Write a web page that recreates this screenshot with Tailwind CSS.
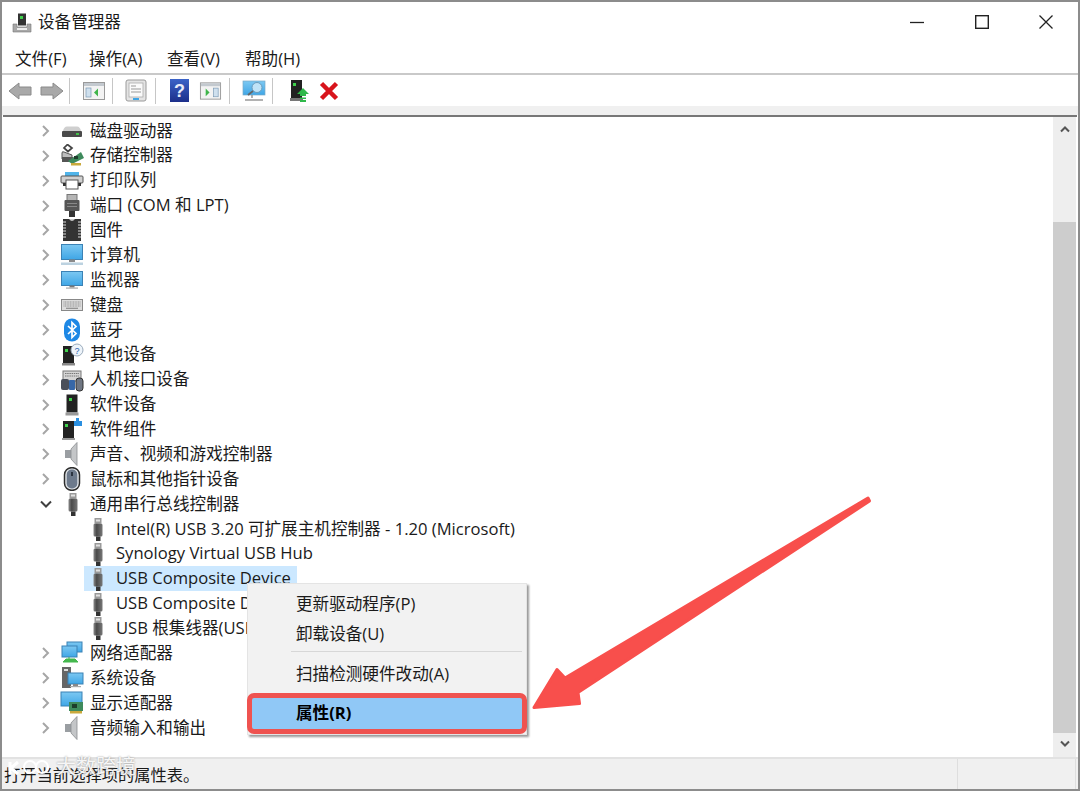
<!DOCTYPE html>
<html lang="zh-CN">
<head>
<meta charset="utf-8">
<title>设备管理器</title>
<script src="https://cdn.jsdelivr.net/npm/@tailwindcss/browser@4"></script>
</head>
<body class="m-0 overflow-hidden bg-white">
<svg width="0" height="0" class="absolute">
  <defs>
    <linearGradient id="scr" x1="0" y1="0" x2="0" y2="1"><stop offset="0" stop-color="#7cc8f2"/><stop offset="1" stop-color="#3fa6e6"/></linearGradient>
    <linearGradient id="blu" x1="0" y1="0" x2="0" y2="1"><stop offset="0" stop-color="#3b63c8"/><stop offset="1" stop-color="#1c2f8a"/></linearGradient>
    <linearGradient id="usbb" x1="0" y1="0" x2="1" y2="0"><stop offset="0" stop-color="#8a8a8a"/><stop offset=".35" stop-color="#4a4a4a"/><stop offset="1" stop-color="#777"/></linearGradient>
  </defs>
  <symbol id="hdd" viewBox="0 0 24 24"><path d="M3 12 Q4 7.500 7 7.500 H17 Q20 7.500 21 12Z" fill="#cfcfcf"/><rect x="2" y="12" width="20" height="6" rx="1" fill="#4a4a4a"/><rect x="16" y="14" width="3" height="2" fill="#43c04a"/></symbol>
  <symbol id="storage" viewBox="0 0 24 24"><path d="M7.500 0.500 L12 4 L8 7.500 L4 4Z" fill="none" stroke="#444" stroke-width="1.700"/><path d="M2 9 Q2 7 4 8 L12 11 V15 H2Z" fill="#bdbdbd" stroke="#555"/><rect x="2" y="13" width="11" height="5" fill="#555"/><path d="M8 17 L21 8 L24 14 L12 20Z" fill="#3e8a5c"/><rect x="14" y="12" width="4" height="3" fill="#1d3d2c"/><rect x="11" y="19" width="10" height="2.500" fill="#c9a93c"/></symbol>
  <symbol id="printer" viewBox="0 0 24 24"><rect x="5" y="3" width="14" height="5" fill="#4fb4ea"/><rect x="1" y="7" width="22" height="7" rx="1" fill="#d0d0d0" stroke="#555"/><rect x="3" y="14" width="18" height="3" fill="#333"/><rect x="6" y="11" width="12" height="9" fill="#fff" stroke="#555"/></symbol>
  <symbol id="port" viewBox="0 0 24 24"><rect x="7" y="0.500" width="10" height="6" fill="#b5b5b5" stroke="#777"/><rect x="4.500" y="6" width="15" height="11" rx="1" fill="#555"/><rect x="7" y="9" width="10" height="1" fill="#888"/><rect x="7" y="12" width="10" height="1" fill="#888"/><rect x="9" y="17" width="6" height="6" fill="#333"/></symbol>
  <symbol id="chip" viewBox="0 0 24 24"><rect x="3" y="1" width="18" height="22" fill="#c9c9c9"/><path d="M3 1 H9 Q12 5 15 1 H21 V23 H3Z" fill="#333"/><path d="M3 4 H6 M3 7 H6 M3 10 H6 M3 13 H6 M3 16 H6 M3 19 H6 M18 4 H21 M18 7 H21 M18 10 H21 M18 13 H21 M18 16 H21 M18 19 H21" stroke="#ddd"/></symbol>
  <symbol id="pc" viewBox="0 0 24 24"><rect x="1.500" y="1.500" width="21" height="15" fill="url(#scr)" stroke="#3b82b5"/><rect x="9" y="16.500" width="6" height="2.500" fill="#8a8a8a"/><rect x="1" y="19.500" width="22" height="2.500" fill="#bcd2e0"/></symbol>
  <symbol id="mon" viewBox="0 0 24 24"><rect x="1.500" y="3.500" width="21" height="14" fill="url(#scr)" stroke="#3b82b5"/><rect x="9.500" y="17.500" width="5" height="2" fill="#777"/><rect x="6" y="19.500" width="12" height="1.200" fill="#aaa"/></symbol>
  <symbol id="kbd" viewBox="0 0 24 24"><rect x="1.500" y="6.500" width="21" height="11" fill="#dcdcdc" stroke="#888"/><path d="M3.500 9 H20.500 M3.500 11 H20.500 M3.500 13 H20.500" stroke="#8c8c8c" stroke-dasharray="1 .6"/><path d="M6 15.300 H18" stroke="#8c8c8c" stroke-width="1.200"/></symbol>
  <symbol id="bt" viewBox="0 0 24 24"><rect x="4" y="0.500" width="16" height="23" rx="8" fill="#1e88e5"/><path d="M8 8 L16 15.500 L12 19.500 V4.500 L16 8.500 L8 16" fill="none" stroke="#fff" stroke-width="1.700"/></symbol>
  <symbol id="other" viewBox="0 0 24 24"><rect x="3" y="3" width="11" height="17" fill="#222"/><rect x="5" y="6" width="3" height="3" fill="#3fd14c"/><rect x="2" y="20" width="13" height="2.500" fill="#888"/><circle cx="17" cy="7" r="6" fill="#eef4fa" stroke="#9ab"/><text x="17" y="10.500" font-size="9" text-anchor="middle" fill="#2a62b0" font-family="Liberation Sans">?</text></symbol>
  <symbol id="hid" viewBox="0 0 24 24"><rect x="3" y="3" width="18" height="10" fill="#d5d5d5" stroke="#777"/><path d="M5 5.500 H19 M5 8 H19" stroke="#777" stroke-dasharray="1.500 .7"/><rect x="1" y="11" width="8" height="11" rx="2" fill="#4a4f5a"/><rect x="9" y="12" width="6" height="10" rx="1" fill="#3667a8"/><rect x="16" y="10" width="7" height="13" rx="3" fill="#6f7682" stroke="#333"/></symbol>
  <symbol id="soft" viewBox="0 0 24 24"><rect x="6.500" y="1.500" width="11" height="18" fill="#222"/><rect x="9" y="5" width="3" height="3" fill="#3fd14c"/><rect x="5.500" y="19.500" width="13" height="3" fill="#999"/></symbol>
  <symbol id="comp" viewBox="0 0 24 24"><rect x="3" y="4" width="11" height="17" fill="#222"/><rect x="5" y="7" width="3" height="3" fill="#3fd14c"/><rect x="2" y="21" width="13" height="2" fill="#999"/><path d="M14 4 H16 V1 H19 V4 H22 V9 H14Z" fill="#2a8fe0"/></symbol>
  <symbol id="spk" viewBox="0 0 24 24"><rect x="5" y="8" width="6" height="8" fill="#9a9ea2"/><path d="M11 7 L17 0.500 V23.500 L11 17Z" fill="#c4c6c8" stroke="#8a8d90" stroke-width=".8"/></symbol>
  <symbol id="mouse" viewBox="0 0 24 24"><rect x="4.500" y="0.700" width="15" height="22.600" rx="7" fill="#dfe3e7" stroke="#2d2d2d" stroke-width="1.500"/><rect x="6.700" y="2.500" width="10.600" height="19" rx="5" fill="#6d7a8c"/><rect x="11" y="5" width="2" height="4" fill="#2a3340"/></symbol>
  <symbol id="usb" viewBox="0 0 24 24"><rect x="9.500" y="1" width="7" height="5.500" fill="#9a9a9a"/><rect x="11" y="2.500" width="4" height="2" fill="#e2e2e2"/><rect x="8.500" y="6.500" width="9" height="13" rx="1.500" fill="url(#usbb)"/><rect x="11" y="19.500" width="4.500" height="4.500" fill="#333"/></symbol>
  <symbol id="net" viewBox="0 0 24 24"><rect x="7" y="1" width="15" height="10" fill="url(#scr)" stroke="#3b82b5"/><rect x="2" y="5" width="15" height="11" fill="url(#scr)" stroke="#3b82b5"/><path d="M9 16 V19 M3 21 H18 L15 18 H6Z" fill="#45b84e" stroke="#45b84e"/></symbol>
  <symbol id="sys" viewBox="0 0 24 24"><rect x="2" y="1" width="9" height="21" fill="#666"/><rect x="4" y="3" width="4" height="2" fill="#ddd"/><rect x="8" y="7" width="15" height="11" fill="url(#scr)" stroke="#3b82b5"/><rect x="13" y="18" width="5" height="2" fill="#888"/><rect x="10" y="20" width="11" height="1.200" fill="#aaa"/></symbol>
  <symbol id="disp" viewBox="0 0 24 24"><rect x="1" y="1" width="21" height="14" fill="url(#scr)" stroke="#3b82b5"/><rect x="9" y="11" width="14" height="9" fill="#3e8a5c"/><rect x="12" y="13" width="5" height="4" fill="#1d3d2c"/><rect x="10" y="20" width="12" height="2.500" fill="#c9a93c"/></symbol>
  <symbol id="chev" viewBox="0 0 18 18"><path d="M6 4 L11 9 L6 14" fill="none" stroke="#a6a6a6" stroke-width="2"/></symbol>
  <symbol id="chevd" viewBox="0 0 18 18"><path d="M4 6.500 L9 11.500 L14 6.500" fill="none" stroke="#404040" stroke-width="2"/></symbol>
</svg>

<div class="relative w-[1080px] h-[791px] flex flex-col border-x-2 border-t-2 border-b-2 border-[#8c8c8c] text-[#1a1a1a] text-[16.6px] font-['Open_Sans','Noto_Sans_CJK_SC',sans-serif] overflow-hidden">

  <!-- title bar -->
  <div class="h-[44px] flex items-center shrink-0 bg-white">
    <svg class="ml-[10px] mb-[3px] w-5 h-5" viewBox="0 0 20 20"><rect x="6" y="0.500" width="8" height="12" fill="#333"/><rect x="8" y="3" width="3" height="3" fill="#3fd14c"/><path d="M1 11 H5 V14 H15 V11 H19 V19 H1Z" fill="#a8a8a8" stroke="#777" stroke-width=".6"/><rect x="5" y="15" width="10" height="2" fill="#eee"/></svg>
    <span class="ml-[6px] mb-[4px] leading-none">设备管理器</span>
    <div class="ml-auto flex items-center mb-[4px]">
      <svg class="w-4 h-4 mr-[49px]" viewBox="0 0 16 16"><path d="M1 8.500 H15" stroke="#222" stroke-width="1.300"/></svg>
      <svg class="w-4 h-4 mr-[48px]" viewBox="0 0 16 16"><rect x="1.700" y="1.700" width="12.600" height="12.600" fill="none" stroke="#222" stroke-width="1.400"/></svg>
      <svg class="w-4 h-4 mr-[24px]" viewBox="0 0 16 16"><path d="M1.500 1.500 L14.500 14.500 M14.500 1.500 L1.500 14.500" stroke="#222" stroke-width="1.300"/></svg>
    </div>
  </div>

  <!-- menu bar -->
  <div class="h-[27px] flex items-center shrink-0 pl-[13px] bg-white">
    <span class="w-[74px]">文件(F)</span><span class="w-[78px]">操作(A)</span><span class="w-[78px]">查看(V)</span><span>帮助(H)</span>
  </div>

  <!-- toolbar -->
  <div class="h-[33px] shrink-0 flex items-center border-t-2 border-[#c9c9c9] bg-white pl-[6px]">
    <svg class="w-[24px] h-[20px]" viewBox="0 0 24 20"><path d="M1 10 L11 2 V6 H23 V14 H11 V18Z" fill="#a9a9a9" stroke="#8a8a8a"/></svg>
    <svg class="w-[24px] h-[20px] ml-[8px]" viewBox="0 0 24 20"><path d="M23 10 L13 2 V6 H1 V14 H13 V18Z" fill="#a9a9a9" stroke="#8a8a8a"/></svg>
    <div class="w-px h-[26px] bg-[#c6c6c6] ml-[5px]"></div>
    <svg class="w-[24px] h-[22px] ml-[12px]" viewBox="0 0 24 22"><rect x="1.500" y="2.500" width="21" height="17" fill="#f3f3f3" stroke="#9a9a9a"/><rect x="2" y="3" width="20" height="3" fill="#c3c9cf"/><rect x="4" y="8" width="5" height="9" fill="#cfe0ee" stroke="#7b9ab5" stroke-width=".7"/><path d="M16 8.500 L12 12.500 L16 16.500Z" fill="#3fb54a"/></svg>
    <div class="w-px h-[26px] bg-[#c6c6c6] ml-[6px]"></div>
    <svg class="w-[22px] h-[24px] ml-[12px]" viewBox="0 0 22 24"><rect x="1" y="1" width="20" height="21" rx="2" fill="#e4e4e4" stroke="#9a9a9a"/><rect x="4" y="4" width="14" height="14" fill="#fafafa" stroke="#aaa" stroke-width=".8"/><path d="M6 7 H11 M6 10 H16 M6 13 H16" stroke="#999"/><rect x="8" y="19" width="6" height="2" fill="#3fa6e6"/></svg>
    <div class="w-px h-[26px] bg-[#c6c6c6] ml-[8px]"></div>
    <svg class="w-[19px] h-[23px] ml-[14px]" viewBox="0 0 19 23"><rect width="19" height="23" fill="url(#blu)"/><text x="9.500" y="18" text-anchor="middle" font-size="18" font-weight="700" fill="#e8ecf8" font-family="Liberation Sans">?</text></svg>
    <svg class="w-[23px] h-[22px] ml-[10px]" viewBox="0 0 24 22"><rect x="1.500" y="2.500" width="21" height="17" fill="#f3f3f3" stroke="#9a9a9a"/><rect x="2" y="3" width="20" height="3" fill="#c3c9cf"/><rect x="15" y="8" width="5" height="9" fill="#cfe0ee" stroke="#7b9ab5" stroke-width=".7"/><path d="M7 8.500 L11 12.500 L7 16.500Z" fill="#3fb54a"/></svg>
    <div class="w-px h-[26px] bg-[#c6c6c6] ml-[7px]"></div>
    <svg class="w-[24px] h-[24px] ml-[12px]" viewBox="0 0 24 24"><rect x="1" y="2" width="22" height="14" fill="url(#scr)" stroke="#7aa9c7" stroke-width=".7"/><circle cx="15" cy="8.500" r="5" fill="#bfe3f7" stroke="#6a9cbc"/><path d="M11 12 L6 16" stroke="#666" stroke-width="1.800"/><path d="M10 16 V19 M3 21 H21" stroke="#999" stroke-width="1.500"/></svg>
    <div class="w-px h-[26px] bg-[#c6c6c6] ml-[6px]"></div>
    <svg class="w-[20px] h-[24px] ml-[17px]" viewBox="0 0 20 24"><rect x="1" y="1" width="11" height="18" fill="#222"/><rect x="3" y="4" width="3" height="3" fill="#3fd14c"/><rect x="0" y="19" width="13" height="3" fill="#777"/><path d="M13 9 L19 15 H16 V17 H10 V15 H7Z M10 18.500 H16 V20 H10Z M10 21 H16 V23 H10Z" fill="#2fb84a"/></svg>
    <svg class="w-[20px] h-[20px] ml-[9px]" viewBox="0 0 20 20"><path d="M2.500 2.500 L17.500 17.500 M17.500 2.500 L2.500 17.500" stroke="#d8141c" stroke-width="4.500"/></svg>
  </div>

  <!-- strip -->
  <div class="h-[9px] shrink-0 bg-[#f0f0f0]"></div>

  <!-- body -->
  <div class="flex-1 min-h-0 flex border-t-2 border-[#777] ml-px mr-px">
    <div class="flex-1 pt-[1.5px] flex flex-col">
      <div class="flex items-center h-[24.89px] pl-[34px]"><svg class="w-[18px] h-[18px] mr-[5px]"><use href="#chev"/></svg><svg class="w-6 h-6 mr-[6px]"><use href="#hdd"/></svg><span>磁盘驱动器</span></div>
      <div class="flex items-center h-[24.89px] pl-[34px]"><svg class="w-[18px] h-[18px] mr-[5px]"><use href="#chev"/></svg><svg class="w-6 h-6 mr-[6px]"><use href="#storage"/></svg><span>存储控制器</span></div>
      <div class="flex items-center h-[24.89px] pl-[34px]"><svg class="w-[18px] h-[18px] mr-[5px]"><use href="#chev"/></svg><svg class="w-6 h-6 mr-[6px]"><use href="#printer"/></svg><span>打印队列</span></div>
      <div class="flex items-center h-[24.89px] pl-[34px]"><svg class="w-[18px] h-[18px] mr-[5px]"><use href="#chev"/></svg><svg class="w-6 h-6 mr-[6px]"><use href="#port"/></svg><span>端口 (COM 和 LPT)</span></div>
      <div class="flex items-center h-[24.89px] pl-[34px]"><svg class="w-[18px] h-[18px] mr-[5px]"><use href="#chev"/></svg><svg class="w-6 h-6 mr-[6px]"><use href="#chip"/></svg><span>固件</span></div>
      <div class="flex items-center h-[24.89px] pl-[34px]"><svg class="w-[18px] h-[18px] mr-[5px]"><use href="#chev"/></svg><svg class="w-6 h-6 mr-[6px]"><use href="#pc"/></svg><span>计算机</span></div>
      <div class="flex items-center h-[24.89px] pl-[34px]"><svg class="w-[18px] h-[18px] mr-[5px]"><use href="#chev"/></svg><svg class="w-6 h-6 mr-[6px]"><use href="#mon"/></svg><span>监视器</span></div>
      <div class="flex items-center h-[24.89px] pl-[34px]"><svg class="w-[18px] h-[18px] mr-[5px]"><use href="#chev"/></svg><svg class="w-6 h-6 mr-[6px]"><use href="#kbd"/></svg><span>键盘</span></div>
      <div class="flex items-center h-[24.89px] pl-[34px]"><svg class="w-[18px] h-[18px] mr-[5px]"><use href="#chev"/></svg><svg class="w-6 h-6 mr-[6px]"><use href="#bt"/></svg><span>蓝牙</span></div>
      <div class="flex items-center h-[24.89px] pl-[34px]"><svg class="w-[18px] h-[18px] mr-[5px]"><use href="#chev"/></svg><svg class="w-6 h-6 mr-[6px]"><use href="#other"/></svg><span>其他设备</span></div>
      <div class="flex items-center h-[24.89px] pl-[34px]"><svg class="w-[18px] h-[18px] mr-[5px]"><use href="#chev"/></svg><svg class="w-6 h-6 mr-[6px]"><use href="#hid"/></svg><span>人机接口设备</span></div>
      <div class="flex items-center h-[24.89px] pl-[34px]"><svg class="w-[18px] h-[18px] mr-[5px]"><use href="#chev"/></svg><svg class="w-6 h-6 mr-[6px]"><use href="#soft"/></svg><span>软件设备</span></div>
      <div class="flex items-center h-[24.89px] pl-[34px]"><svg class="w-[18px] h-[18px] mr-[5px]"><use href="#chev"/></svg><svg class="w-6 h-6 mr-[6px]"><use href="#comp"/></svg><span>软件组件</span></div>
      <div class="flex items-center h-[24.89px] pl-[34px]"><svg class="w-[18px] h-[18px] mr-[5px]"><use href="#chev"/></svg><svg class="w-6 h-6 mr-[6px]"><use href="#spk"/></svg><span>声音、视频和游戏控制器</span></div>
      <div class="flex items-center h-[24.89px] pl-[34px]"><svg class="w-[18px] h-[18px] mr-[5px]"><use href="#chev"/></svg><svg class="w-6 h-6 mr-[6px]"><use href="#mouse"/></svg><span>鼠标和其他指针设备</span></div>
      <div class="flex items-center h-[24.89px] pl-[34px]"><svg class="w-[18px] h-[18px] mr-[5px]"><use href="#chevd"/></svg><svg class="w-6 h-6 mr-[6px]"><use href="#usb"/></svg><span>通用串行总线控制器</span></div>
      <div class="flex items-center h-[24.89px] ml-[81px] pl-px pr-[6px] w-fit"><svg class="w-6 h-6 mr-[7px]"><use href="#usb"/></svg><span>Intel(R) USB 3.20 可扩展主机控制器 - 1.20 (Microsoft)</span></div>
      <div class="flex items-center h-[24.89px] ml-[81px] pl-px pr-[6px] w-fit"><svg class="w-6 h-6 mr-[7px]"><use href="#usb"/></svg><span>Synology Virtual USB Hub</span></div>
      <div class="flex items-center h-[24.89px] ml-[81px] pl-px pr-[6px] w-fit bg-[#cce8ff]"><svg class="w-6 h-6 mr-[7px]"><use href="#usb"/></svg><span>USB Composite Device</span></div>
      <div class="flex items-center h-[24.89px] ml-[81px] pl-px pr-[6px] w-fit"><svg class="w-6 h-6 mr-[7px]"><use href="#usb"/></svg><span>USB Composite Device</span></div>
      <div class="flex items-center h-[24.89px] ml-[81px] pl-px pr-[6px] w-fit"><svg class="w-6 h-6 mr-[7px]"><use href="#usb"/></svg><span>USB 根集线器(USB 3.0)</span></div>
      <div class="flex items-center h-[24.89px] pl-[34px]"><svg class="w-[18px] h-[18px] mr-[5px]"><use href="#chev"/></svg><svg class="w-6 h-6 mr-[6px]"><use href="#net"/></svg><span>网络适配器</span></div>
      <div class="flex items-center h-[24.89px] pl-[34px]"><svg class="w-[18px] h-[18px] mr-[5px]"><use href="#chev"/></svg><svg class="w-6 h-6 mr-[6px]"><use href="#sys"/></svg><span>系统设备</span></div>
      <div class="flex items-center h-[24.89px] pl-[34px]"><svg class="w-[18px] h-[18px] mr-[5px]"><use href="#chev"/></svg><svg class="w-6 h-6 mr-[6px]"><use href="#disp"/></svg><span>显示适配器</span></div>
      <div class="flex items-center h-[24.89px] pl-[34px]"><svg class="w-[18px] h-[18px] mr-[5px]"><use href="#chev"/></svg><svg class="w-6 h-6 mr-[6px]"><use href="#spk"/></svg><span>音频输入和输出</span></div>
    </div>
    <!-- scrollbar -->
    <div class="w-[23px] shrink-0 mr-[1px] bg-[#eeeeee] flex flex-col">
      <div class="h-[105px] shrink-0 pt-[6px]"><svg class="w-[18px] h-[12px] mx-auto" viewBox="0 0 18 12"><path d="M5 8.500 L9 4.500 L13 8.500" fill="none" stroke="#555" stroke-width="2"/></svg></div>
      <div class="h-[511px] shrink-0 bg-[#cdcdcd]"></div>
      <div class="pt-[5px]"><svg class="w-[18px] h-[12px] mx-auto" viewBox="0 0 18 12"><path d="M5 3.500 L9 7.500 L13 3.500" fill="none" stroke="#555" stroke-width="2"/></svg></div>
    </div>
  </div>

  <!-- status bar -->
  <div class="relative h-[32px] shrink-0 border-t-2 border-[#e2e2e2] bg-[#f0f0f0] flex items-center text-[16.3px] pl-[2px] pt-[2px]">
    <span>打开当前选择项的属性表。</span>
    <div class="absolute left-[955px] bottom-0 h-[30px] w-px bg-[#dedede]"></div>
    <div class="absolute right-[2px] bottom-0 h-[30px] w-px bg-[#dedede]"></div>
  </div>

  <!-- watermark -->
  <div class="absolute left-[4px] top-[752px] flex items-center text-[20px] leading-[26px] text-white/90 [text-shadow:0_0_2px_#888]">
    <svg class="w-[46px] h-[22px] mr-[4px]" viewBox="0 0 46 22"><path d="M4 6 V18 M12 6 L5 12 L12 18" fill="none" stroke="#fff" stroke-width="3"/><circle cx="24" cy="11" r="6" fill="none" stroke="#fff" stroke-width="2"/><circle cx="36" cy="11" r="6" fill="none" stroke="#fff" stroke-width="2"/></svg>
    <span>大数跨境</span>
  </div>

  <!-- context menu -->
  <div class="absolute left-[245px] top-[581px] w-[280px] h-[152px] bg-[#f2f2f2] shadow-[2px_2px_2px_#9a9a9a] border border-[#e4e4e4] flex flex-col">
    <div class="h-[38px] flex items-end pl-[48px] pb-[5px]">更新驱动程序(P)</div>
    <div class="h-[29px] flex items-center pl-[48px] pb-[4px]">卸载设备(U)</div>
    <div class="h-px bg-[#d7d7d7] ml-[43px] mr-[4px]"></div>
    <div class="h-[40px] flex items-center pl-[48px] pt-[4px]">扫描检测硬件改动(A)</div>
    <div class="h-[41px] flex items-center pl-[44px] -mx-px border-[5px] border-[#ef5350] rounded-[7px] bg-[#90c8f6] font-bold mt-px text-black">属性(R)</div>
  </div>

  <!-- arrow -->
  <svg class="absolute left-[-2px] top-[-2px] pointer-events-none" width="1080" height="791" viewBox="0 0 1080 791">
    <path d="M868 498 L869.500 501 L578 692.500 L579.500 703.500 L534 707.500 L557 669.500 L565 678Z" fill="#f84f4c" stroke="#f84f4c" stroke-width="3" stroke-linejoin="round"/>
  </svg>
</div>
</body>
</html>
